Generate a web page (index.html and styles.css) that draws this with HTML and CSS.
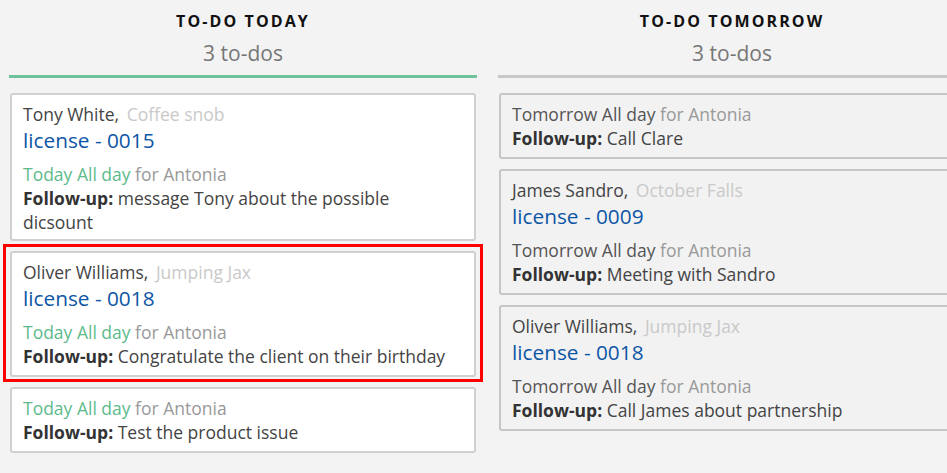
FILE: index.html
```html
<!DOCTYPE html>
<html>
<head>
<meta charset="utf-8">
<link rel="stylesheet" href="styles.css">
</head>
<body>
<div class="board">
  <section class="column">
    <header class="col-head today">
      <div class="col-title">TO-DO TODAY</div>
      <div class="col-count">3 to-dos</div>
    </header>
    <div class="cards">
      <div class="card">
        <div class="who">Tony White, <span class="company">Coffee snob</span></div>
        <div class="deal">license - 0015</div>
        <div class="when"><span class="date green">Today All day</span> <span class="owner">for Antonia</span></div>
        <div class="task tight"><b>Follow-up:</b> message Tony about the possible dicsount</div>
      </div>
      <div class="card selected">
        <div class="who">Oliver Williams, <span class="company">Jumping Jax</span></div>
        <div class="deal">license - 0018</div>
        <div class="when"><span class="date green">Today All day</span> <span class="owner">for Antonia</span></div>
        <div class="task"><b>Follow-up:</b> Congratulate the client on their birthday</div>
      </div>
      <div class="card">
        <div class="when first"><span class="date green">Today All day</span> <span class="owner">for Antonia</span></div>
        <div class="task"><b>Follow-up:</b> Test the product issue</div>
      </div>
    </div>
  </section>
  <section class="column">
    <header class="col-head tomorrow">
      <div class="col-title">TO-DO TOMORROW</div>
      <div class="col-count">3 to-dos</div>
    </header>
    <div class="cards">
      <div class="card muted">
        <div class="when first"><span class="date">Tomorrow All day</span> <span class="owner">for Antonia</span></div>
        <div class="task"><b>Follow-up:</b> Call Clare</div>
      </div>
      <div class="card muted">
        <div class="who">James Sandro, <span class="company">October Falls</span></div>
        <div class="deal">license - 0009</div>
        <div class="when"><span class="date">Tomorrow All day</span> <span class="owner">for Antonia</span></div>
        <div class="task"><b>Follow-up:</b> Meeting with Sandro</div>
      </div>
      <div class="card muted">
        <div class="who">Oliver Williams, <span class="company">Jumping Jax</span></div>
        <div class="deal">license - 0018</div>
        <div class="when"><span class="date">Tomorrow All day</span> <span class="owner">for Antonia</span></div>
        <div class="task"><b>Follow-up:</b> Call James about partnership</div>
      </div>
    </div>
  </section>
</div>
</body>
</html>
```

FILE: styles.css
```css
html, body {
  margin: 0;
  padding: 0;
  background: #f3f3f3;
  overflow: hidden;
  font-family: "Open Sans", "Noto Sans", sans-serif;
  color: #444;
}

.board {
  display: flex;
  gap: 21px;
  padding: 0 9px;
  width: max-content;
}

.column {
  width: 468px;
  flex: none;
}

.col-head {
  text-align: center;
  padding: 10px 0 10px;
  border-bottom: 3px solid #c8c8c8;
}

.col-head.today {
  border-bottom-color: #6ec29c;
}

.col-title {
  font-size: 16px;
  line-height: 22px;
  font-weight: 700;
  letter-spacing: 2.1px;
  color: #111;
}

.col-count {
  margin-top: 9px;
  font-size: 21px;
  line-height: 24px;
  color: #777;
}

.cards {
  margin-top: 15px;
  display: flex;
  flex-direction: column;
  gap: 10px;
  padding: 0 1px;
}

.card {
  position: relative;
  background: #fff;
  border: 2px solid #d0d0d0;
  border-radius: 3px;
  padding: 7px 16px 7px 11px;
  font-size: 17.5px;
  line-height: 24px;
}

.card.muted {
  background: #f2f2f2;
  border-color: #c6c6c6;
}

.card.selected::after {
  content: "";
  position: absolute;
  top: -9px;
  left: -9px;
  right: -9px;
  bottom: -7px;
  border: 3px solid #f00;
  pointer-events: none;
}

.company {
  color: #c9c9c9;
  margin-left: 3px;
}

.deal {
  font-size: 20.8px;
  line-height: 28px;
  color: #0d56a6;
  margin-bottom: 8px;
}

.date {
  color: #555;
}

.date.green {
  color: #5dbb8c;
}

.owner {
  color: #999;
}

.task {
  color: #444;
}

.task.tight {
  margin-bottom: -2px;
}

.task b {
  color: #333;
  font-weight: 700;
}
```
